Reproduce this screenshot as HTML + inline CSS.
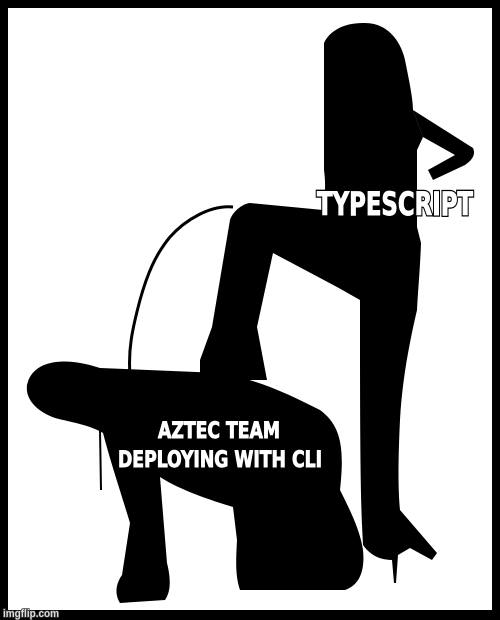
<!DOCTYPE html>
<html><head><meta charset="utf-8"><style>
html,body{margin:0;padding:0;background:#000;}
svg{display:block}
.s{font-family:"DejaVu Sans Condensed","Liberation Sans",sans-serif;font-weight:bold;fill:#000;stroke:#000;stroke-width:3.5px;}
.t{font-family:"DejaVu Sans Condensed","Liberation Sans",sans-serif;font-weight:bold;fill:#fff;stroke:#fff;stroke-width:0.9px;}
</style></head><body>
<svg width="500" height="620" viewBox="0 0 500 620" xmlns="http://www.w3.org/2000/svg">
<rect width="500" height="620" fill="#000"/>
<rect x="8" y="8" width="484" height="602" fill="#fff"/>
<g fill="#000">
<path d="M363,23 C390,22 403,45 406,65 C410,85 413,100 413,110 L423,137 L417,150 L417,227 L421,243 C420,270 418,290 417,310 C410,340 402,380 400,420 C398,460 398,490 400,510 L437,553 L432,560 L410,548 L398,555 L396,583 L394,583 L392,560 C380,560 370,555 363,545 L362,525 C360,480 360,400 360,300 L337,287 L273,253 L257,327 L267,380 L200,380 L200,360 L212,327 L230,220 C233,210 245,203 250,203 L323,210 C325,195 326,185 324,170 L324,43 C330,30 345,23 363,23 Z"/>
<path d="M413,110 L473,148 C476,155 472,160 465,165 L433,180 L428,170 L455,155 L423,137 Z"/>
<path d="M27,385 C32,362 60,355 100,368 L220,373 C260,380 290,395 320,410 C340,425 345,445 340,490 C350,510 360,530 363,550 C365,570 360,585 345,590 L240,590 C235,575 236,560 237,540 L233,507 C210,500 180,490 160,477 L167,563 C170,575 172,590 165,600 L120,603 C115,595 115,585 122,575 L130,523 C120,490 110,460 103,433 C90,425 70,422 55,418 C38,412 25,400 27,385 Z"/>
</g>
<path d="M233,207 C210,205 185,220 170,237 C155,255 147,275 140,300 C132,330 128,350 130,375" fill="none" stroke="#000" stroke-width="3"/>
<path d="M100,430 L101,490" fill="none" stroke="#000" stroke-width="2"/>
<g class="s">
<text x="317" y="215" font-size="32" textLength="156" lengthAdjust="spacingAndGlyphs">TYPESCRIPT</text>
<text x="158" y="438" font-size="22" textLength="122" lengthAdjust="spacingAndGlyphs">AZTEC TEAM</text>
<text x="118" y="467" font-size="22" textLength="204" lengthAdjust="spacingAndGlyphs">DEPLOYING WITH CLI</text>
</g>
<g class="t">
<text x="317" y="215" font-size="32" textLength="156" lengthAdjust="spacingAndGlyphs">TYPESCRIPT</text>
<text x="158" y="438" font-size="22" textLength="122" lengthAdjust="spacingAndGlyphs">AZTEC TEAM</text>
<text x="118" y="467" font-size="22" textLength="204" lengthAdjust="spacingAndGlyphs">DEPLOYING WITH CLI</text>
</g>
<text x="3" y="617" font-family="Liberation Sans,sans-serif" font-weight="bold" font-size="11" fill="#ddd" stroke="#333" stroke-width="1.5" paint-order="stroke" textLength="56" lengthAdjust="spacingAndGlyphs">imgflip.com</text>
</svg>
</body></html>
